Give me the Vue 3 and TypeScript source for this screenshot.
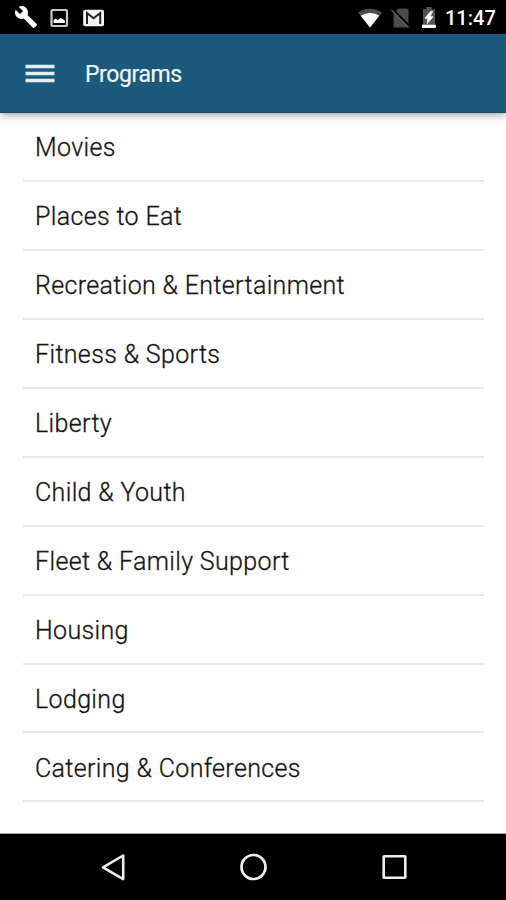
<script setup lang="ts">
const programs: string[] = [
  'Movies',
  'Places to Eat',
  'Recreation & Entertainment',
  'Fitness & Sports',
  'Liberty',
  'Child & Youth',
  'Fleet & Family Support',
  'Housing',
  'Lodging',
  'Catering & Conferences',
]
</script>

<template>
  <div class="screen">
    <div class="status">
      <div class="status-left">
        <svg class="wrench" viewBox="0 0 24 24" width="24" height="24">
          <path d="M22.7 19l-9.1-9.1c.9-2.3.4-5-1.500-6.900-2-2-5-2.400-7.400-1.300L9 6 6 9 1.600 4.700C.4 7.100.9 10.100 2.900 12.100c1.900 1.900 4.600 2.400 6.900 1.500l9.100 9.100c.4.4 1 .4 1.400 0l2.300-2.300c.5-.4.5-1.100.1-1.400z" fill="#fff" />
        </svg>
        <svg class="photo" viewBox="0 0 20 20" width="20" height="20">
          <rect x="2.500" y="2" width="15.500" height="16" rx="1" fill="none" stroke="#c8c8c8" stroke-width="2.200" />
          <path d="M4.500 15V12.300l2.200-1.800 2 1.500 3-2 4.300 2.500V15z" fill="#fff" />
        </svg>
        <svg class="mail" viewBox="0 0 22 18" width="22" height="18">
          <rect x=".2" y=".8" width="20.800" height="16.400" rx="2" fill="#f4f4f4" />
          <path d="M4 15V4L10.600 9.200l6.600-5.200V15" fill="none" stroke="#222" stroke-width="2" />
        </svg>
      </div>
      <div class="status-right">
        <svg class="wifi" viewBox="0 0 26 20" width="26" height="20">
          <path d="M13 19.500L1 4.500C7.500-.6 18.500-.6 25 4.500z" fill="#4c4c4c" />
          <path d="M13 19.500L3.700 7.800c5.200-3.900 13.400-3.900 18.600 0z" fill="#fff" />
        </svg>
        <svg class="nosim" viewBox="0 0 20 20" width="20" height="20">
          <path d="M7.300.5H16q1.500 0 1.500 1.500v16q0 1.500-1.500 1.500H4q-1.500 0-1.500-1.500V5.300z" fill="#4b4b4b" />
          <path d="M1.500 1L19 18.500" stroke="#000" stroke-width="2" />
          <path d="M.5 2L17.500 19.500" stroke="#5a5a5a" stroke-width="1.500" />
        </svg>
        <svg class="battery" viewBox="0 0 16 22" width="16" height="22">
          <path d="M5.500 0h5v2.200H14V21H2V2.200h3.500z" fill="#555" />
          <path d="M1 17.700h13.800V20q0 1-1 1H2q-1 0-1-1z" fill="#fff" />
          <path d="M9.500 4.500L4 11.300h3L6.200 16.500 12 9.800H9l2.500-5.300z" fill="#fff" stroke="#fff" stroke-width=".8" />
        </svg>
        <span class="clock">11:47</span>
      </div>
    </div>
    <header class="bar">
      <svg class="menu" viewBox="0 0 30 20" width="30" height="20">
        <path d="M.5 2.500h29M.5 9.500h29M.5 16.500h29" stroke="#e6edf2" stroke-width="3.600" />
      </svg>
      <h1 class="title">Programs</h1>
    </header>
    <ul class="list">
      <li v-for="p in programs" :key="p" class="row"><span>{{ p }}</span></li>
    </ul>
    <nav class="nav">
      <svg viewBox="0 0 30 30" width="30" height="30">
        <path d="M26.200 3.500v23.600L6 15.300z" fill="none" stroke="#eee" stroke-width="2.600" stroke-linejoin="round" />
      </svg>
      <svg viewBox="0 0 30 30" width="30" height="30">
        <circle cx="15.500" cy="15" r="12" fill="none" stroke="#eee" stroke-width="2.700" />
      </svg>
      <svg viewBox="0 0 30 30" width="30" height="30">
        <rect x="4.700" y="4.200" width="21.600" height="21.600" rx=".5" fill="none" stroke="#eee" stroke-width="2.600" />
      </svg>
    </nav>
  </div>
</template>

<style>
body {
  margin: 0;
  background: #fff;
}
</style>

<style scoped>
.screen {
  width: 506px;
  height: 900px;
  display: flex;
  flex-direction: column;
  overflow: hidden;
  background: #fefefe;
  font-family: Roboto, "Liberation Sans", sans-serif;
}
svg {
  display: block;
  flex: none;
}
.status {
  height: 34px;
  flex: none;
  box-sizing: border-box;
  padding: 0 12px 0 14px;
  display: flex;
  justify-content: space-between;
  background: #000;
}
.status-left,
.status-right {
  display: flex;
  align-items: center;
  height: 35px;
}
.wrench {
  margin-top: -1px;
}
.photo {
  margin-left: 11px;
}
.mail {
  margin-left: 14px;
}
.nosim {
  margin-left: 8px;
}
.battery {
  margin-left: 10px;
}
.clock {
  width: 49px;
  margin-left: 8px;
  font-size: 20px;
  font-weight: 500;
  line-height: 36px;
  color: #fff;
  white-space: nowrap;
}
.bar {
  position: relative;
  height: 79px;
  flex: none;
  box-sizing: border-box;
  padding-left: 25px;
  display: flex;
  align-items: center;
  background: #1b5a7d;
  border-bottom: 1px solid #124a6b;
  box-shadow: 0 2px 8px rgba(0, 0, 0, 0.36);
}
.menu {
  margin-top: 2px;
}
.title {
  margin: 4px 0 0 30px;
  font-size: 23px;
  font-weight: 400;
  letter-spacing: -0.4px;
  line-height: 30px;
  color: #f3f8fd;
  -webkit-text-stroke: 0.2px #f3f8fd;
}
.list {
  flex: 1;
  min-height: 0;
  margin: 0;
  padding: 0 22px 0 23px;
  list-style: none;
}
.row {
  height: 68.950px;
  box-sizing: border-box;
  padding: 3px 12px 0;
  display: flex;
  align-items: center;
  border-bottom: 2px solid #e8e8e8;
  font-size: 25px;
  font-weight: 300;
  letter-spacing: 0.350px;
  color: #151515;
  -webkit-text-stroke: 0.3px #151515;
  white-space: nowrap;
}
.nav {
  height: 67px;
  flex: none;
  box-sizing: border-box;
  padding: 0 97px;
  border-top: 1px solid #aaa;
  display: flex;
  align-items: center;
  justify-content: space-between;
  background: #000;
}
</style>
